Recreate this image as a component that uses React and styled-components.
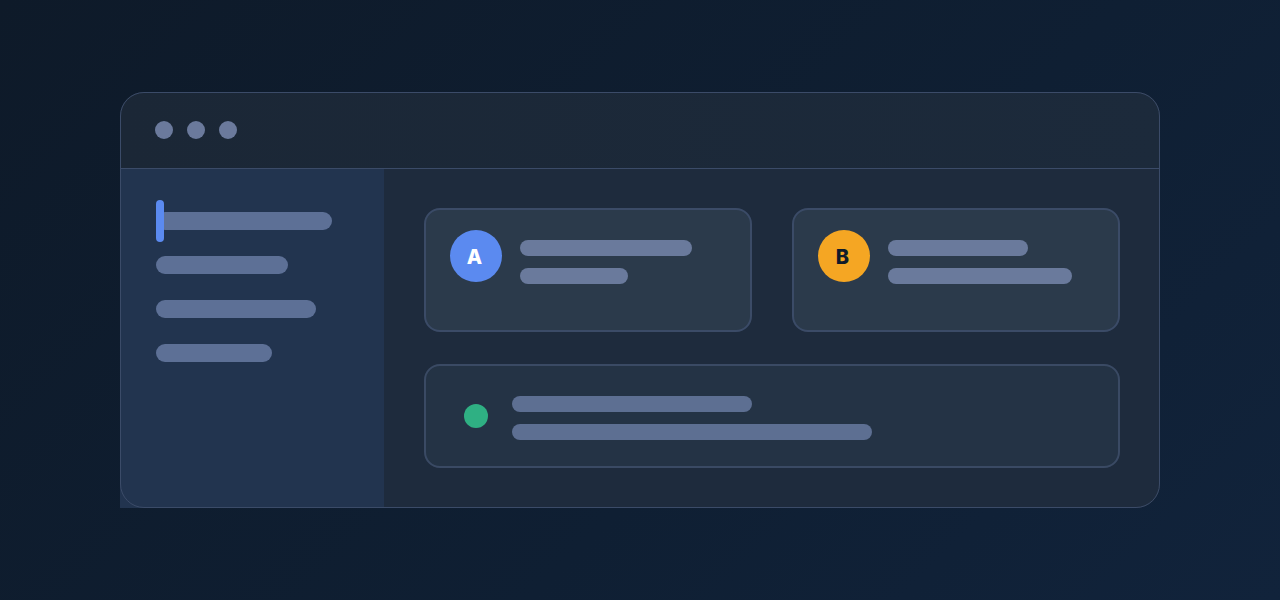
import React from "react";
import styled, { createGlobalStyle } from "styled-components";

const Global = createGlobalStyle`
  html, body { margin: 0; padding: 0; }
  body {
    width: 1280px; height: 600px; overflow: hidden;
    background: linear-gradient(135deg, #0e1a29 0%, #0f1f33 60%, #11233b 100%);
    font-family: "Inter", "DejaVu Sans", sans-serif;
  }
`;

const Stage = styled.div`
  width: 1280px; height: 600px;
  display: flex; align-items: center; justify-content: center;
`;

const Window = styled.div`
  position: relative;
  width: 1040px; height: 416px;
  box-sizing: border-box;
  border-radius: 24px;
  background: #1d2a3b;
  display: flex; flex-direction: column;
  &::after {
    content: ""; position: absolute; inset: 0;
    border: 1.5px solid #3b4b68; border-radius: 24px;
    pointer-events: none;
  }
`;

const Header = styled.div`
  height: 77px; flex: none;
  display: flex; align-items: center; gap: 14px;
  padding-left: 35px;
  box-sizing: border-box;
  background: linear-gradient(90deg, #1b2736, #1c2a3b);
  border-radius: 24px 24px 0 0;
  border-bottom: 1.5px solid #3b4b68;
`;

const Dot = styled.span`
  width: 18px; height: 18px; border-radius: 50%;
  background: #6b7a9c;
`;

const Body = styled.div`
  flex: 1; display: flex;
`;

const Sidebar = styled.div`
  width: 264px; flex: none;
  background: #22344f;
  box-sizing: border-box;
  padding: 43px 0 0 36px;
  display: flex; flex-direction: column; gap: 26px;
`;

const NavItem = styled.div`
  position: relative;
  width: ${p => p.w}px; height: 18px; border-radius: 9px;
  background: #5d7096;
  ${p => p.active && `
    &::before {
      content: ""; position: absolute; left: 0; top: -12px;
      width: 8px; height: 42px; border-radius: 4px; background: #5b8af0;
    }
  `}
`;

const Main = styled.div`
  flex: 1;
  padding: 39px 40px 0 40px;
  display: flex; flex-direction: column; gap: 32px;
  background: #1e2b3d;
  border-radius: 0 0 24px 0;
`;

const Row = styled.div`
  display: flex; gap: 40px;
`;

const Card = styled.div`
  flex: 1; height: 124px; box-sizing: border-box;
  border: 2px solid #3b4b67; border-radius: 16px;
  background: #2b3a4b;
  padding: 20px 24px;
  display: flex; gap: 18px; align-items: flex-start;
`;

const Avatar = styled.div`
  width: 52px; height: 52px; border-radius: 50%; flex: none;
  background: ${p => p.bg};
  color: ${p => p.fg};
  display: flex; align-items: center; justify-content: center;
  font-family: "Inter", "DejaVu Sans", sans-serif; font-weight: 800; font-size: 20px;
  padding: 2px 3px 0 0; box-sizing: border-box;
`;

const Lines = styled.div`
  display: flex; flex-direction: column; gap: 12px;
  padding-top: ${p => p.pt ?? 10}px;
`;

const Bar = styled.div`
  width: ${p => p.w}px; height: 16px; border-radius: 8px;
  background: ${p => p.c || "#6a7a9c"};
`;

const Wide = styled.div`
  height: 104px; box-sizing: border-box;
  border: 2px solid #3a4a64; border-radius: 16px;
  background: #243345;
  display: flex; align-items: center; gap: 24px;
  padding-left: 38px;
`;

const Status = styled.div`
  width: 24px; height: 24px; border-radius: 50%;
  background: #2fb083;
`;

export default function App() {
  return (
    <>
      <Global />
      <Stage>
        <Window>
          <Header>
            <Dot /><Dot /><Dot />
          </Header>
          <Body>
            <Sidebar>
              <NavItem w={176} active />
              <NavItem w={132} />
              <NavItem w={160} />
              <NavItem w={116} />
            </Sidebar>
            <Main>
              <Row>
                <Card>
                  <Avatar bg="#5b8af0" fg="#ffffff">A</Avatar>
                  <Lines><Bar w={172} /><Bar w={108} /></Lines>
                </Card>
                <Card>
                  <Avatar bg="#f5a623" fg="#0f1b2a">B</Avatar>
                  <Lines><Bar w={140} /><Bar w={184} /></Lines>
                </Card>
              </Row>
              <Wide>
                <Status />
                <Lines pt={4}><Bar w={240} c="#5d6f92" /><Bar w={360} c="#5d6f92" /></Lines>
              </Wide>
            </Main>
          </Body>
        </Window>
      </Stage>
    </>
  );
}
